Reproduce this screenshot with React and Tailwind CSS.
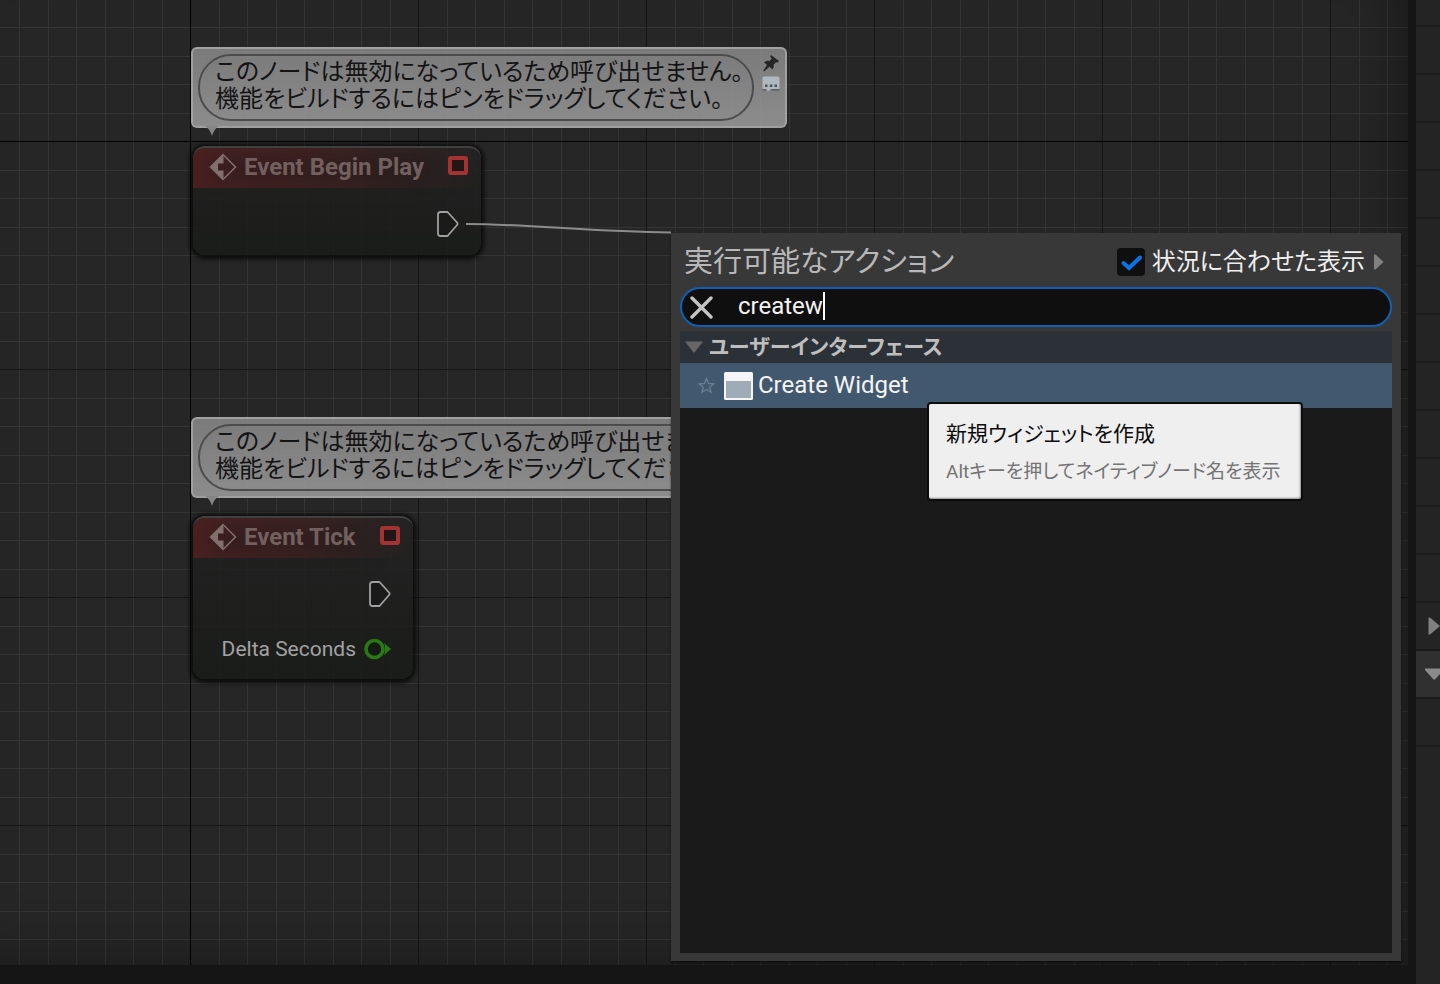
// src/App.jsx
import React, { useState } from "react";

const ROWS = Array.from({ length: 15 }, (_, i) => i);

function Grid() {
  const steps = [29, 57, 86, 114, 143, 171, 200];
  return (
    <svg className="absolute inset-0 w-full h-full" aria-hidden="true">
      <defs>
        <pattern id="grid" x="190" y="141" width="228" height="228" patternUnits="userSpaceOnUse">
          {steps.map((n) => (
            <g key={n} fill="#343434">
              <rect x={n} y="0" width="1" height="228" />
              <rect x="0" y={n} width="228" height="1" />
            </g>
          ))}
          <rect width="1" height="228" fill="#161616" />
          <rect width="228" height="1" fill="#161616" />
        </pattern>
      </defs>
      <rect width="100%" height="100%" fill="url(#grid)" />
      <rect x="190" width="1" height="100%" fill="#000" />
      <rect y="141" width="100%" height="1" fill="#000" />
    </svg>
  );
}

function Wire() {
  return (
    <svg width="210" height="14" viewBox="0 0 210 14" className="absolute left-[465px] top-[220px]" aria-hidden="true">
      <path d="M1 4 C65 4 125 12 206 12.5" fill="none" stroke="#8c8c8c" strokeWidth="2" />
    </svg>
  );
}

function EventIcon() {
  return (
    <svg width="28" height="28" viewBox="0 0 28 28" className="shrink-0" aria-hidden="true">
      <path d="M14 1.5 L26.5 14 L14 26.5 L1.5 14 Z" fill="none" stroke="#80706e" strokeWidth="1.5" />
      <path d="M14.5 1.5 V10.5 H9 V17.5 H14.5 V26.5 L1.5 14 Z" fill="#80706e" />
    </svg>
  );
}

function ExecPin() {
  return (
    <svg width="22" height="26" viewBox="0 0 22 26" className="block" aria-hidden="true">
      <path
        d="M3.5 1 H10.5 L20.5 12 V13.5 L10.5 25 H3.5 Q1 25 1 22.5 V3.5 Q1 1 3.5 1 Z"
        fill="#1a1a1a"
        stroke="#a0a0a0"
        strokeWidth="1.8"
        strokeLinejoin="round"
      />
    </svg>
  );
}

function FloatPin() {
  return (
    <svg width="27" height="22" viewBox="0 0 27 22" className="block" aria-hidden="true">
      <circle cx="10.5" cy="11" r="8.5" fill="#161a15" stroke="#2a7a12" strokeWidth="3.6" />
      <path d="M20 5 L27 11 L20 17 Q22 11 20 5 Z" fill="#2a7a12" />
    </svg>
  );
}

function Bubble() {
  return (
    <div className="relative flex w-[596px] h-[81px] p-[5px] rounded-md border-2 border-[#a9a9a9]/80 bg-linear-to-b from-[#858585]/90 to-[#989898]/90">
      <p className="w-[557px] h-[67px] pl-[15px] pt-[3px] rounded-[33px] border-2 border-[#4c4c4c] text-2xl leading-[27px] text-[#141414] whitespace-nowrap">
        このノードは無効になっているため呼び出せません。
        <br />
        機能をビルドするにはピンをドラッグしてください。
      </p>
      <div className="flex flex-col items-center gap-1 pl-2">
        <button type="button" aria-label="ピン留め">
          <svg width="18" height="18" viewBox="0 0 18 18" className="block">
            <path d="M9 1 L17 7 L15.5 8.5 L14 8.2 L11.5 11 Q12.5 13.5 10.5 15.5 L7.5 12.8 L2 17.5 L1.2 16.8 L5 11 L2 8.2 Q4.5 6 7.5 7 L9.8 4.5 L8.2 2.8 Z" fill="#262626" />
          </svg>
        </button>
        <button type="button" aria-label="コメント">
          <svg width="18" height="16" viewBox="0 0 18 16" className="block">
            <path d="M2 0.5 H16 Q17.5 0.5 17.5 2 V13 H9 L6 15.5 L4.5 13 H0.5 V2 Q0.5 0.5 2 0.5 Z" fill="#b0b8bf" />
            <path d="M0.5 13.8 H4 M9.5 13.8 H17.5" stroke="#555" strokeWidth="1.2" />
            <path d="M3 8.5 H5.5 V11 H3 Z M7.8 8.5 H10.3 V11 H7.8 Z M12.5 8.5 H15 V11 H12.5 Z" fill="#4b5157" />
          </svg>
        </button>
      </div>
      <svg width="14" height="10" viewBox="0 0 14 10" className="absolute left-3 top-full" aria-hidden="true">
        <path d="M0 0 H14 Q9 3 7 10 Q5 3 0 0 Z" fill="#858585" />
      </svg>
    </div>
  );
}

function EventNode({ title, className, children }) {
  return (
    <section className={`mt-[18px] ml-[2px] rounded-xl overflow-hidden border-t-2 border-[#4a4a4a]/80 bg-linear-to-b from-[#232323]/90 to-[#1a1c19]/90 shadow-[0_1px_4px_3px_rgba(0,0,0,0.7)] ${className}`}>
      <header className="relative flex h-10 pt-[5px] pl-4 pr-[13px] bg-linear-to-r from-[#552020]/80 via-[#482323]/70 to-transparent">
        <div className="absolute left-4 right-12 top-3 h-5 bg-[#221818]/60 blur-md" />
        <div className="relative flex flex-1 items-start gap-[7px]">
          <EventIcon />
          <h2 className="flex-1 text-2xl leading-7 font-bold text-[#72605f] whitespace-nowrap">{title}</h2>
          <span className="mt-[3px] w-5 h-[19px] rounded-[3px] border-4 border-[#a33232] bg-[#241616]" />
        </div>
      </header>
      {children}
    </section>
  );
}

function Popup() {
  const [query, setQuery] = useState("createw");
  const [context, setContext] = useState(true);

  return (
    <div className="absolute left-[671px] top-[233px] flex flex-col w-[730px] h-[728px] px-[9px] pb-2 bg-[#383838] shadow-[0_2px_2px_rgba(0,0,0,0.6)]">
      <div className="flex items-center h-[54px] pt-[3px] pl-1 pr-2">
        <h1 className="flex-1 text-[29px] leading-10 text-[#b8b8b8]">実行可能なアクション</h1>
        <label className="flex items-center gap-[7px] text-2xl leading-8 text-[#eeeeee]">
          <span className="relative w-7 h-7">
            <input
              type="checkbox"
              checked={context}
              onChange={(e) => setContext(e.target.checked)}
              className="peer block appearance-none w-7 h-7 rounded-sm bg-[#0f0f0f]"
            />
            <svg viewBox="0 0 28 28" className="absolute inset-0 hidden peer-checked:block pointer-events-none">
              <path d="M6.5 15 L12 20 L23 9.5" fill="none" stroke="#0a73e6" strokeWidth="4" strokeLinecap="round" />
            </svg>
          </span>
          状況に合わせた表示
        </label>
        <button type="button" aria-label="オプション" className="ml-2">
          <svg width="11" height="16" viewBox="0 0 11 16" className="block">
            <path d="M1 0.5 H2.5 L10.5 8 L2.5 15.5 H1 Z" fill="#808080" />
          </svg>
        </button>
      </div>

      <div className="flex items-center h-10 px-2 rounded-full border-2 border-[#0f5fb8] bg-[#0f0f0f]">
        <button type="button" aria-label="クリア" onClick={() => setQuery("")}>
          <svg width="23" height="23" viewBox="0 0 23 23" className="block">
            <path d="M2 2 L21 21 M21 2 L2 21" stroke="#c4c4c4" strokeWidth="3.4" strokeLinecap="round" />
          </svg>
        </button>
        <div className="flex pb-[3px] ml-[25px]">
          <input
            type="text"
            aria-label="検索"
            value={query}
            onChange={(e) => setQuery(e.target.value)}
            className="field-sizing-content text-2xl leading-7 text-[#f2f2f2] caret-transparent outline-none"
          />
          <span className="w-[2px] h-7 bg-white" />
        </div>
      </div>

      <div className="relative flex-1 mt-1 bg-[#1a1a1a]">
        <button type="button" className="flex items-center gap-[6px] w-full h-8 pl-[5px] bg-[#2c3138] text-[21px] leading-8 font-bold text-[#bebebe]">
          <svg width="18" height="12" viewBox="0 0 18 12" className="block" aria-hidden="true">
            <path d="M0 0.5 H18 L9.5 11.5 H8.5 Z" fill="#666" />
          </svg>
          ユーザーインターフェース
        </button>
        <button type="button" className="flex items-center w-full h-[45px] pl-[18px] bg-[#42586f] text-2xl text-[#f4f4f4]">
          <svg width="17" height="17" viewBox="0 0 17 17" aria-hidden="true">
            <path d="M8.5 1.5 L10.5 6.5 L15.8 6.8 L11.7 10.2 L13 15.3 L8.5 12.4 L4 15.3 L5.3 10.2 L1.2 6.8 L6.5 6.5 Z" fill="none" stroke="#6b7d90" strokeWidth="1.3" />
          </svg>
          <svg width="29" height="28" viewBox="0 0 29 28" className="ml-[9px] mr-[5px]" aria-hidden="true">
            <rect width="29" height="28" rx="1.5" fill="#f5f5f5" />
            <rect x="2" y="9" width="25" height="17" fill="#9fabb7" />
          </svg>
          <span className="pb-[2px] leading-8">Create Widget</span>
        </button>

        <div role="tooltip" className="absolute left-[247px] top-[71px] px-[17px] pt-[14px] w-[376px] h-[99px] border-2 border-[#0c0c0c] rounded-sm bg-[#efefef] whitespace-nowrap shadow-[inset_-1px_-1px_2px_rgba(0,0,0,0.4)]">
          <p className="text-[21px] leading-8 text-[#0c0c0c]">新規ウィジェットを作成</p>
          <p className="mt-[6px] text-[19px] leading-8 text-[#747474]">Altキーを押してネイティブノード名を表示</p>
        </div>
      </div>
    </div>
  );
}

export default function App() {
  return (
    <div className="flex gap-2 h-screen overflow-hidden bg-[#151515] font-[Roboto,'Noto_Sans_CJK_JP',sans-serif] [font-feature-settings:'palt']">
      <main className="relative flex-1 min-w-0 mb-[19px] bg-[#262626]">
        <div className="absolute inset-0 overflow-hidden">
          <Grid />
          <div className="absolute inset-0 shadow-[inset_-30px_-20px_60px_-20px_rgba(0,0,0,0.35)]" />
          <div className="absolute left-[191px] top-[47px]">
            <Bubble />
            <EventNode title="Event Begin Play" className="w-[288px] h-[109px]">
              <div className="flex justify-end pt-[23px] pr-[22px]">
                <ExecPin />
              </div>
            </EventNode>
          </div>
          <div className="absolute left-[191px] top-[417px]">
            <Bubble />
            <EventNode title="Event Tick" className="w-[220px] h-[163px]">
              <div className="flex flex-col items-end pt-[23px] pr-[22px]">
                <ExecPin />
                <div className="flex items-center gap-2 mt-7 text-[21px] leading-7 text-[#a2a2a2]">
                  Delta Seconds
                  <FloatPin />
                </div>
              </div>
            </EventNode>
          </div>
          <Wire />
        </div>
        <Popup />
      </main>

      <aside className="w-6 shrink-0 overflow-hidden bg-[#242424]">
        <div className="h-[27px] border-b-2 border-[#1a1a1a]" />
        {ROWS.map((i) => (
          <div
            key={i}
            className={`flex items-center justify-end h-12 border-b-2 border-[#1a1a1a] ${i === 13 ? "bg-[#303030]" : ""}`}
          >
            {i === 12 && (
              <button type="button" aria-label="展開">
                <svg width="12" height="18" viewBox="0 0 12 18" className="block">
                  <path d="M0.5 0.5 L2 0.5 L12 9 L2 17.5 H0.5 Z" fill="#808080" />
                </svg>
              </button>
            )}
            {i === 13 && (
              <button type="button" aria-label="折りたたむ">
                <svg width="15" height="12" viewBox="0 0 15 12" className="block">
                  <path d="M0 0.5 H15 V6 L10 11.5 H8.5 L0 2 Z" fill="#8a8a8a" />
                </svg>
              </button>
            )}
          </div>
        ))}
      </aside>
    </div>
  );
}
